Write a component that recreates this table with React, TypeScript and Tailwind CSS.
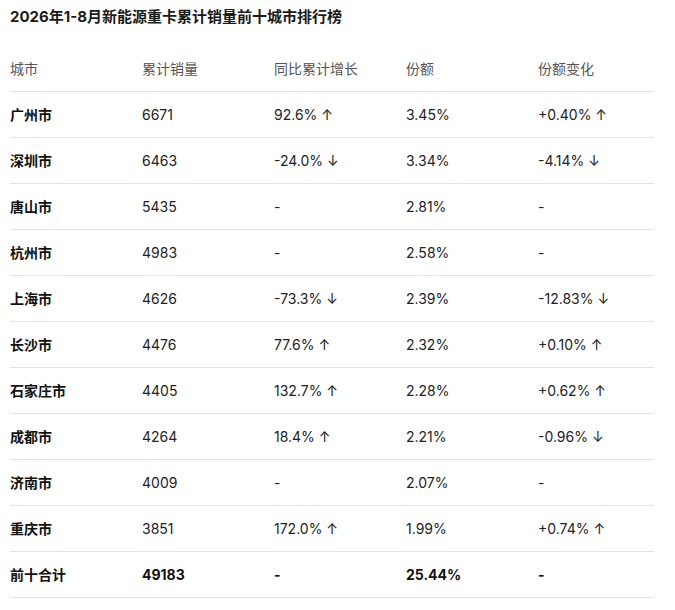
import React from 'react';

const rows = [
  { city: '广州市', sales: '6671', yoy: '92.6% ↑', share: '3.45%', change: '+0.40% ↑' },
  { city: '深圳市', sales: '6463', yoy: '-24.0% ↓', share: '3.34%', change: '-4.14% ↓' },
  { city: '唐山市', sales: '5435', yoy: '-', share: '2.81%', change: '-' },
  { city: '杭州市', sales: '4983', yoy: '-', share: '2.58%', change: '-' },
  { city: '上海市', sales: '4626', yoy: '-73.3% ↓', share: '2.39%', change: '-12.83% ↓' },
  { city: '长沙市', sales: '4476', yoy: '77.6% ↑', share: '2.32%', change: '+0.10% ↑' },
  { city: '石家庄市', sales: '4405', yoy: '132.7% ↑', share: '2.28%', change: '+0.62% ↑' },
  { city: '成都市', sales: '4264', yoy: '18.4% ↑', share: '2.21%', change: '-0.96% ↓' },
  { city: '济南市', sales: '4009', yoy: '-', share: '2.07%', change: '-' },
  { city: '重庆市', sales: '3851', yoy: '172.0% ↑', share: '1.99%', change: '+0.74% ↑' },
];

const cols = 'grid grid-cols-[132px_132px_132px_132px_116px] items-center h-[46px] border-b border-[#e3e3e3]';

export default function App() {
  return (
    <div className="w-[675px] h-[610px] bg-white px-[10px] pt-[6px] font-['Inter','Noto_Sans_CJK_SC',sans-serif] text-[14px] text-[#222]">
      <h1 className="text-[15px] leading-[22px] font-bold text-[#1a1a1a]">2026年1-8月新能源重卡累计销量前十城市排行榜</h1>

      <div className="mt-[18px] w-[644px]">
        <div className={`${cols} text-[#555]`}>
          <div>城市</div>
          <div>累计销量</div>
          <div>同比累计增长</div>
          <div>份额</div>
          <div>份额变化</div>
        </div>

        {rows.map((r) => (
          <div key={r.city} className={cols}>
            <div className="font-bold text-[#111]">{r.city}</div>
            <div>{r.sales}</div>
            <div>{r.yoy}</div>
            <div>{r.share}</div>
            <div>{r.change}</div>
          </div>
        ))}

        <div className={`${cols} font-bold text-[#111]`}>
          <div>前十合计</div>
          <div>49183</div>
          <div>-</div>
          <div>25.44%</div>
          <div>-</div>
        </div>
      </div>
    </div>
  );
}
